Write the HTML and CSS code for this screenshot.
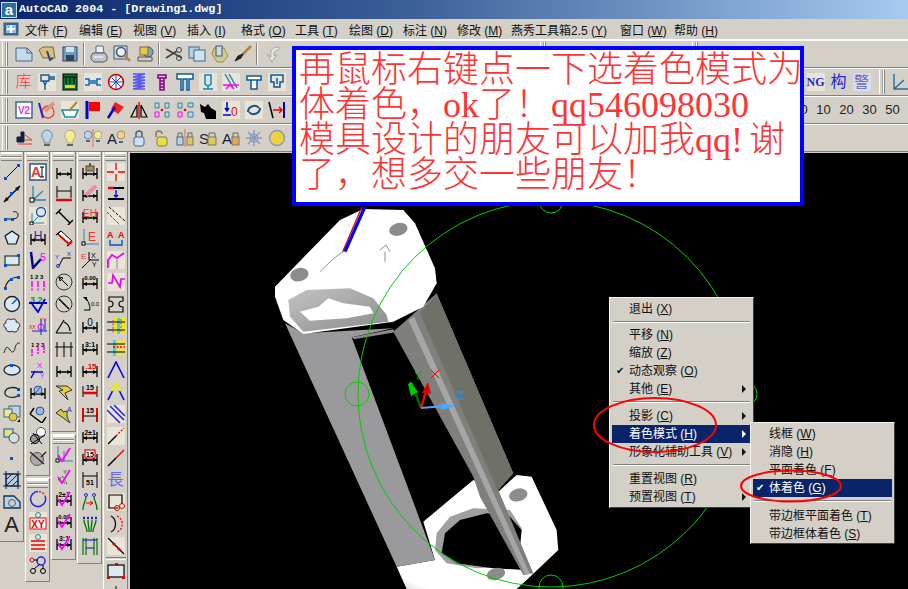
FILE: index.html
```html
<!DOCTYPE html>
<html lang="zh">
<head>
<meta charset="utf-8">
<title>AutoCAD 2004</title>
<link rel="stylesheet" href="styles.css">
</head>
<body>
<svg class="defs" width="0" height="0" aria-hidden="true">
<symbol id="d" viewBox="0 0 18 18"><path d="M2 5v11M16 5v11M2 11h14" stroke="#000" stroke-width="1.3" fill="none"/><path d="M2 11l4-2v4zM16 11l-4-2v4z" fill="#000"/></symbol>
<symbol id="c" viewBox="0 0 18 18"><path d="M3 9l4 6L15 2" stroke="#f0f" stroke-width="1.8" fill="none"/></symbol>
</svg>
<div class="page">
<header class="title"><span class="logo">a</span><span class="title-text">AutoCAD 2004 - [Drawing1.dwg]</span></header>
<nav class="menubar">
<svg class="doc-ico" viewBox="0 0 16 14"><rect x="1" y="1" width="14" height="12" fill="#2a6a9a" stroke="#4a5a6a"/><rect x="3" y="3" width="10" height="8" fill="#8fc0e0"/><path d="M8 3v8M4 7h8" stroke="#fff" stroke-width="2"/></svg>
<span class="mi">文件 (<u>F</u>)</span><span class="mi">编辑 (<u>E</u>)</span><span class="mi">视图 (<u>V</u>)</span><span class="mi">插入 (<u>I</u>)</span><span class="mi">格式 (<u>O</u>)</span><span class="mi">工具 (<u>T</u>)</span><span class="mi">绘图 (<u>D</u>)</span><span class="mi">标注 (<u>N</u>)</span><span class="mi">修改 (<u>M</u>)</span><span class="mi wide">燕秀工具箱2.5 (<u>Y</u>)</span><span class="mi">窗口 (<u>W</u>)</span><span class="mi">帮助 (<u>H</u>)</span>
</nav>

<section class="tb">
<span class="grip"></span>
<svg class="t" viewBox="0 0 18 18"><path d="M1 3h11l5 5v8H1z" fill="#c5dbe9" stroke="#3a6a8a"/><path d="M12 3v5h5" stroke="#3a6a8a"/></svg>
<svg class="t" viewBox="0 0 18 18"><path d="M1 5l4-3h10l2 11H5z" fill="#d8c080" stroke="#7a6a30"/><path d="M9 6l3 9 3-2" stroke="#2a4a7a" stroke-width="2"/></svg>
<svg class="t" viewBox="0 0 18 18"><rect x="2" y="2" width="14" height="14" fill="#6f9fc0" stroke="#2a4a6a"/><rect x="5" y="2" width="8" height="5" fill="#dde"/><rect x="5" y="10" width="8" height="6" fill="#345"/></svg>
<span class="sep"></span>
<svg class="t" viewBox="0 0 18 18"><path d="M6 8V1h7l1 7z" fill="#eee" stroke="#667"/><path d="M3 8h12l2 3v4l-3 2H4l-3-3v-3z" fill="#bcc4cc" stroke="#556"/><path d="M4 12h9" stroke="#fff"/></svg>
<svg class="t" viewBox="0 0 18 18"><rect x="1" y="1" width="13" height="13" fill="#c8dbe8" stroke="#456"/><circle cx="8" cy="7" r="4.5" fill="#eef" stroke="#456" stroke-width="1.5"/><path d="M11 10l6 6" stroke="#a86" stroke-width="2.5"/></svg>
<svg class="t" viewBox="0 0 18 18"><circle cx="12" cy="7" r="5" fill="#7ab" stroke="#456"/><rect x="4" y="2" width="8" height="8" fill="#dc4" stroke="#863"/><path d="M2 12h14v4H2z" fill="#ccc" stroke="#555"/></svg>
<span class="sep"></span>
<svg class="t" viewBox="0 0 18 18"><path d="M1 4l16 9M1 13l11-7" stroke="#444" stroke-width="1.6"/><circle cx="14" cy="5" r="2.5" stroke="#345"/><circle cx="14" cy="13" r="2.5" stroke="#345"/></svg>
<svg class="t" viewBox="0 0 18 18"><rect x="1" y="2" width="10" height="11" fill="#b8d0e2" stroke="#3a6a8a"/><rect x="6" y="5" width="11" height="11" fill="#d2e2ee" stroke="#3a6a8a"/></svg>
<svg class="t" viewBox="0 0 18 18"><path d="M3 3h10l4 8-5 6H6L1 9z" fill="#cc9" stroke="#a83"/><rect x="5" y="1" width="6" height="10" fill="#ccdbe8" stroke="#456"/></svg>
<svg class="t" viewBox="0 0 18 18"><path d="M17 1L8 10" stroke="#a83" stroke-width="2.5"/><path d="M9 9l-2 4-6 3 3-5z" fill="#222" stroke="#222"/></svg>
<span class="sep"></span>
<svg class="t" viewBox="0 0 18 18"><path d="M16 2c-8 0-9 5-8 10l-4-3 5 8 5-8-3 2c-1-4 1-6 5-6z" fill="#e8e6e0" stroke="#aaa"/></svg>
<span class="fill-a"></span><span class="grip short"></span><span class="fill-b"></span><span class="grip short"></span>
</section>

<section class="tb">
<span class="grip"></span>
<span class="t ku">库</span>
<svg class="t b" viewBox="0 0 18 18"><path d="M3 2h8v6H3zM11 4h6M11 6h6M5 8l2 4 2-4M7 12v5" stroke="#0a5a9a" stroke-width="1.4"/></svg>
<svg class="t" viewBox="0 0 18 18"><rect x="2" y="1" width="14" height="16" fill="#0a7a3a" stroke="#000"/><path d="M2 4h14M5 4v7M9 4v7M13 4v7" stroke="#000"/><rect x="4" y="12" width="10" height="3" fill="#fc0"/></svg>
<svg class="t b" viewBox="0 0 18 18"><path d="M1 6h4v2h8V6h4M1 12h4v-2h8v2h4" stroke="#0a6ac0" stroke-width="1.6"/></svg>
<svg class="t" viewBox="0 0 18 18"><circle cx="9" cy="9" r="7.5" fill="#fff" stroke="#c00" stroke-width="1.5"/><path d="M9 2v14M2 9h14M4 14L14 4M5 5l9 9" stroke="#24c"/></svg>
<svg class="t" viewBox="0 0 18 18"><path d="M3 1h12L3 4h12L3 7h12L3 10h12L3 13h12L3 16h12" stroke="#55e" stroke-width="1.4"/></svg>
<svg class="t" viewBox="0 0 18 18"><path d="M5 2h8v3H5zM7 5h4v12H7zM7 8h4M7 11h4M7 14h4" stroke="#808" stroke-width="1.5"/></svg>
<svg class="t" viewBox="0 0 18 18"><path d="M1 1h16v5h-4v11h-2V6H7v11H5V6H1z" fill="#fff" stroke="#0a5a9a" stroke-width="1.5"/></svg>
<svg class="t b" viewBox="0 0 18 18"><path d="M6 2h6v9l-3 2-3-2zM9 13v3M4 16h10" stroke="#08c" stroke-width="1.5"/></svg>
<svg class="t b" viewBox="0 0 18 18"><path d="M3 1l8 14M7 1l8 14" stroke="#28a" stroke-width="1.5"/><path d="M1 12h16M4 16l4-4 4 4" stroke="#f0f" stroke-width="1.5"/></svg>
<svg class="t" viewBox="0 0 18 18"><path d="M2 3h14v4H2zM6 7h6v9H6z" fill="#fff" stroke="#0a5a9a" stroke-width="1.5"/></svg>
<svg class="t b" viewBox="0 0 18 18"><path d="M3 2h12v7h-3v5H6V9H3zM9 5v6" stroke="#0a5a9a" stroke-width="1.5"/></svg>
<span class="fill-c"></span>
<span class="t ng">NG</span><span class="t gou">构</span><span class="t jing">警</span>
<span class="grip mid"></span>
<svg class="t" viewBox="0 0 18 18"><path d="M2 1v15h15M2 16l10-9" stroke="#2a6a9a" stroke-width="1.4"/></svg>
</section>

<section class="tb">
<span class="grip"></span>
<svg class="t" viewBox="0 0 18 18"><rect x="1" y="1" width="16" height="16" fill="#fff" stroke="#3a6a8a" stroke-width="1.5"/><text x="9" y="13" text-anchor="middle" font-size="10" font-weight="700" fill="#e3e">V2</text></svg>
<svg class="t" viewBox="0 0 18 18"><circle cx="10" cy="11" r="6" stroke="#f33" stroke-width="1.3"/><path d="M1 2l4 15" stroke="#22c" stroke-width="2"/><path d="M7 10l9-8" stroke="#d97" stroke-width="4"/></svg>
<svg class="t b" viewBox="0 0 18 18"><path d="M1 9h16l-3 7H4z" fill="#fff" stroke="#28a" stroke-width="1.6"/><path d="M16 1L8 10" stroke="#a83" stroke-width="2"/></svg>
<svg class="t" viewBox="0 0 18 18"><rect x="5" y="1" width="11" height="9" fill="#f00"/><path d="M3 0v18" stroke="#00c" stroke-width="3"/></svg>
<svg class="t" viewBox="0 0 18 18"><path d="M8 1l9 5-6 7-7-5z" fill="#e22"/><path d="M8 6L1 17" stroke="#00c" stroke-width="2.5"/></svg>
<svg class="t" viewBox="0 0 18 18"><path d="M7 4L1 16h6zM11 4l6 12h-6z" stroke="#000" stroke-width="1.2"/><path d="M9 1v17" stroke="#e00" stroke-width="1.4"/></svg>
<svg class="t" viewBox="0 0 18 18"><path d="M2 2h4v5H2zM12 2h4v5h-4z" stroke="#28a"/><path d="M2 11h4v5H2z" stroke="#f0f"/><path d="M12 11h4v5h-4z" stroke="#28a"/><circle cx="9" cy="9" r="1.3" fill="#e00" stroke="none"/></svg>
<svg class="t" viewBox="0 0 18 18"><path d="M2 2h4v5H2z" stroke="#28a"/><path d="M12 2h5v4h-5zM12 11h5v5h-5z" stroke="#28a"/><path d="M2 11h4v5H2z" stroke="#f0f"/><circle cx="9" cy="9" r="1.3" fill="#e00" stroke="none"/></svg>
<svg class="t" viewBox="0 0 18 18"><path d="M1 3l5 3 3-3 3 4 5 3v8H7l-2-6-3-1z" fill="#000" stroke="none"/></svg>
<svg class="t b" viewBox="0 0 18 18"><path d="M5 1v8M3 7l2 3 2-3M1 14h8" stroke="#00c" stroke-width="1.5"/><text x="9" y="15" font-size="12" fill="#e00">0</text></svg>
<svg class="t b" viewBox="0 0 18 18"><path d="M3 11c0-6 8-8 11-4M15 7c0 6-8 8-11 4" stroke="#158" stroke-width="2"/></svg>
<svg class="t" viewBox="0 0 18 18"><path d="M1 1l4 16" stroke="#000" stroke-width="1.6"/><path d="M16 1v16" stroke="#00c" stroke-width="2"/><path d="M5 9h9M11 6l3 3-3 3" stroke="#e00" stroke-width="1.4"/></svg>
<span class="fill-d"></span>
<span class="t num">00</span><span class="t num">10</span><span class="t num">20</span><span class="t num">30</span><span class="t num">50</span>
</section>

<section class="tb">
<span class="grip"></span>
<svg class="t" viewBox="0 0 18 18"><path d="M6 3h3v5H6zM2 8h7v5H2z" fill="#124" stroke="#124"/><path d="M10 6l7 5M10 11h7M3 15h14" stroke="#e33"/></svg>
<svg class="t" viewBox="0 0 18 18"><path d="M9 1a5.500 5.500 0 0 1 3 10v3H6v-3A5.500 5.500 0 0 1 9 1z" fill="#b8d4e8" stroke="#789"/><path d="M6 16h6" stroke="#567" stroke-width="2"/></svg>
<svg class="t" viewBox="0 0 18 18"><path d="M9 1a5.500 5.500 0 0 1 3 10v3H6v-3A5.500 5.500 0 0 1 9 1z" fill="#f4ec90" stroke="#aa8"/><path d="M6 16h6" stroke="#567" stroke-width="2"/></svg>
<svg class="t" viewBox="0 0 18 18"><circle cx="4" cy="6" r="4" fill="#b8d4e8" stroke="#789"/><circle cx="14" cy="6" r="4" fill="#f4ec90" stroke="#aa8"/><path d="M2 12h4M12 12h4" stroke="#567" stroke-width="2"/><path d="M9 0v18" stroke="#e66"/></svg>
<svg class="t" viewBox="0 0 18 18"><text x="0" y="15" font-size="15" font-family="Liberation Serif" fill="#124">A</text><circle cx="14" cy="6" r="4" fill="#f4d090" stroke="#a86"/><path d="M12 13h4" stroke="#567" stroke-width="2"/></svg>
<svg class="t" viewBox="0 0 18 18"><rect x="4" y="8" width="10" height="9" rx="2" fill="#cfe0ec" stroke="#468"/><path d="M6 8V5a3 3 0 0 1 6 0v3" stroke="#468" stroke-width="1.5"/></svg>
<svg class="t" viewBox="0 0 18 18"><rect x="4" y="8" width="10" height="9" rx="2" fill="#e8e040" stroke="#875"/><path d="M3 8V5a3 3 0 0 1 6 0" stroke="#875" stroke-width="1.5"/></svg>
<svg class="t" viewBox="0 0 18 18"><rect x="1" y="8" width="6" height="8" fill="#b8d4e8" stroke="#468"/><rect x="11" y="8" width="6" height="8" fill="#e0c860" stroke="#875"/><path d="M2 8V4h4v4M12 8V4h4v4" stroke="#666"/><path d="M9 0v18" stroke="#e66"/></svg>
<svg class="t" viewBox="0 0 18 18"><text x="0" y="15" font-size="15" font-family="Liberation Serif" fill="#124">S</text><rect x="9" y="8" width="8" height="8" fill="#e0c860" stroke="#875"/><path d="M10 8V4h6v4" stroke="#666"/></svg>
<svg class="t" viewBox="0 0 18 18"><text x="0" y="15" font-size="15" font-family="Liberation Serif" fill="#124">A</text><rect x="10" y="8" width="7" height="8" fill="#e0a860" stroke="#875"/><path d="M11 8V4h5v4" stroke="#666"/></svg>
<svg class="t" viewBox="0 0 18 18"><circle cx="9" cy="9" r="4" fill="#dde" stroke="#89b"/><path d="M9 1v16M1 9h16M3 3l12 12M15 3L3 15" stroke="#89b" stroke-width="1.5"/></svg>
<svg class="t" viewBox="0 0 18 18"><circle cx="9" cy="9" r="7.500" fill="#ecd040" stroke="#89b" stroke-width="1.400"/></svg>
</section>

<main class="work">
<div class="cols">
<div class="col first"><div class="panel">
<span class="hgrip"></span>
<svg class="i" viewBox="0 0 18 18"><path d="M3 15L15 3" stroke="#111"/><rect x="1" y="14" width="3" height="3" fill="#05c" stroke="none"/><rect x="14" y="1" width="3" height="3" fill="#05c" stroke="none"/></svg>
<svg class="i" viewBox="0 0 18 18"><path d="M1 17L17 1" stroke="#111" stroke-width="1.600"/><rect x="7" y="7" width="3" height="3" fill="#05c" stroke="none"/><path d="M1 17l2-5 3 3zM17 1l-5 2 3 3z" fill="#111" stroke="none"/></svg>
<svg class="i" viewBox="0 0 18 18"><path d="M2 12h7c5 0 6-2 6-4 0-3-3-4-5-3" stroke="#111"/><rect x="1" y="11" width="3" height="3" fill="#05c" stroke="none"/><rect x="8" y="11" width="3" height="3" fill="#05c" stroke="none"/></svg>
<svg class="i" viewBox="0 0 18 18"><path d="M9 2l7 5-3 8H5L2 7z" fill="#d8e8f4" stroke="#111" stroke-width="1.200"/></svg>
<svg class="i" viewBox="0 0 18 18"><rect x="2" y="5" width="14" height="9" fill="#d8e8f4" stroke="#111"/><rect x="1" y="13" width="3" height="3" fill="#05c" stroke="none"/><rect x="14" y="3" width="3" height="3" fill="#05c" stroke="none"/></svg>
<svg class="i" viewBox="0 0 18 18"><path d="M2 16C3 9 8 4 16 4" stroke="#111" stroke-width="1.200"/><rect x="1" y="14" width="3" height="3" fill="#05c" stroke="none"/><rect x="7" y="5" width="3" height="3" fill="#05c" stroke="none"/><rect x="14" y="3" width="3" height="3" fill="#05c" stroke="none"/></svg>
<svg class="i" viewBox="0 0 18 18"><circle cx="9" cy="9" r="7.500" fill="#d8e8f4" stroke="#222" stroke-width="1.300"/><path d="M9 9l5-5" stroke="#05c" stroke-width="1.400"/></svg>
<svg class="i" viewBox="0 0 18 18"><path d="M3 6c-1-4 4-5 5-3 2-2 6-1 5 2 4 0 5 5 2 6 1 4-4 5-6 3-2 2-7 0-6-3-3-1-3-5 0-5z" fill="#d8e8f4" stroke="#222"/></svg>
<svg class="i" viewBox="0 0 18 18"><path d="M1 14c2-8 4-6 6-3s4 3 5-2 3-5 5-5" stroke="#222"/></svg>
<svg class="i" viewBox="0 0 18 18"><ellipse cx="9" cy="9" rx="8" ry="5" fill="#d8e8f4" stroke="#222" stroke-width="1.300"/><rect x="7" y="3" width="3" height="3" fill="#05c" stroke="none"/></svg>
<svg class="i" viewBox="0 0 18 18"><path d="M15 13C9 16 1 14 2 9s11-6 14-2" stroke="#222" stroke-width="1.300"/><rect x="14" y="5" width="3" height="3" fill="#05c" stroke="none"/><rect x="14" y="11" width="3" height="3" fill="#05c" stroke="none"/></svg>
<svg class="i" viewBox="0 0 18 18"><rect x="6" y="1" width="11" height="11" fill="#b8d4e8" stroke="#467"/><rect x="1" y="4" width="8" height="8" fill="#e8e8a0" stroke="#467"/><circle cx="10" cy="12" r="4" fill="#e0c850" stroke="#764"/><path d="M17 14v3h-3z" fill="#000"/></svg>
<svg class="i" viewBox="0 0 18 18"><rect x="1" y="2" width="9" height="8" fill="#f0e070" stroke="#05c"/><circle cx="11" cy="11" r="5" fill="#cfe0ec" stroke="#543"/></svg>
<svg class="i" viewBox="0 0 18 18"><rect x="7" y="8" width="3" height="3" fill="#05c" stroke="none"/></svg>
<svg class="i" viewBox="0 0 18 18"><path d="M3 3h12v12H3z" fill="#bcd" stroke="#124"/><path d="M0 3h18M0 15h18M3 0v18M15 0v18M3 9l6-6M3 15L15 3M9 15l6-6" stroke="#124"/></svg>
<svg class="i" viewBox="0 0 18 18"><path d="M1 3h10l6 6v6H1z" fill="#b8d4e8" stroke="#135" stroke-width="1.300"/><circle cx="9" cy="10" r="3.500" fill="#ccc" stroke="#567"/></svg>
<span class="i bigA">A</span>
</div></div>

<div class="col"><div class="panel">
<span class="hgrip"></span>
<svg class="i" viewBox="0 0 18 18"><rect x="1" y="1" width="16" height="16" fill="#fff" stroke="#357" stroke-width="1.500"/><text x="2" y="14" font-size="14" font-weight="700" fill="#e33">A</text><path d="M11 4h4M13 4v10M11 14h4" stroke="#000"/></svg>
<svg class="i" viewBox="0 0 18 18"><path d="M4 15V1M4 15h13M4 15L14 6" stroke="#28a" stroke-width="1.300"/><rect x="1" y="13" width="4" height="4" fill="#fff" stroke="#000"/></svg>
<svg class="i b" viewBox="0 0 18 18"><circle cx="12" cy="5" r="4.500" stroke="#05c" stroke-width="1.300"/><path d="M3 16V6M3 16h12M3 16l6-6" stroke="#28a"/><rect x="1" y="15" width="3" height="3" fill="#fff" stroke="#000"/></svg>
<svg class="i" viewBox="0 0 18 18"><use href="#d"/><text x="9" y="11" text-anchor="middle" font-size="12" font-family="Liberation Serif" fill="#22a">H</text></svg>
<svg class="i" viewBox="0 0 18 18"><path d="M2 1l2 16 8-9" stroke="#008" stroke-width="2.400"/><text x="11" y="10" font-size="11" fill="#f0f">5</text></svg>
<svg class="i" viewBox="0 0 18 18"><text x="1" y="6" font-size="6" font-weight="700" fill="#000">1 2 3</text><path d="M3 8v6M9 8v6M15 8v6M3 15.500v2M9 15.500v2M15 15.500v2" stroke="#f0f" stroke-width="1.600"/></svg>
<svg class="i" viewBox="0 0 18 18"><text x="1" y="8" font-size="9" font-weight="700" fill="#0a0">3.2</text><path d="M0 8h18M3 9l6 8 7-13" stroke="#00c" stroke-width="1.800"/></svg>
<svg class="i" viewBox="0 0 18 18"><circle cx="12" cy="10" r="3" stroke="#e0c"/><path d="M12 2v16M3 14h15M16 2v12" stroke="#22c"/><text x="0" y="12" font-size="5" fill="#e00">XX</text><text x="11" y="5" font-size="5" fill="#e00">YY</text></svg>
<svg class="i" viewBox="0 0 18 18"><text x="2" y="8" font-size="6" font-weight="700" fill="#000">1 2 3</text><path d="M3 10v4M9 7v5M15 6v5M3 15v2M9 13v2M15 12v2" stroke="#f0f" stroke-width="1.600"/></svg>
<svg class="i" viewBox="0 0 18 18"><text x="8" y="7" font-size="8" fill="#f0f">X</text><path d="M2 17l4-7M2 11h12" stroke="#00c" stroke-width="1.500"/><text x="11" y="17" font-size="7" fill="#f0f">Y</text></svg>
<svg class="i" viewBox="0 0 18 18"><use href="#d"/><circle cx="9" cy="7" r="4" fill="#9bd" stroke="#359"/><path d="M6 11l6-8" stroke="#359"/></svg>
<svg class="i" viewBox="0 0 18 18"><path d="M1 9l12 9M5 3l-4 6M17 12l-4 6" stroke="#000" stroke-width="1.400"/><circle cx="11" cy="6" r="4" fill="#9bd" stroke="#359"/></svg>
<svg class="i" viewBox="0 0 18 18"><circle cx="12" cy="5" r="4.500" fill="#fff" stroke="#555"/><circle cx="6" cy="12" r="4.500" fill="#999" stroke="#000"/><path d="M2 17L16 8M4 6l9 11" stroke="#000"/></svg>
<svg class="i" viewBox="0 0 18 18"><circle cx="8" cy="10" r="6.500" fill="#aaa" stroke="#555"/><path d="M1 3l14 12M12 8l5-5" stroke="#222" stroke-width="1.400"/></svg>
</div><div class="panel second">
<span class="hgrip"></span>
<svg class="i" viewBox="0 0 18 18"><path d="M16 6A7.500 7.500 0 1 1 9 1.500" stroke="#22e" stroke-width="1.500"/><path d="M10 1.500a7.500 7.500 0 0 1 6 4" stroke="#e22" stroke-width="1.500" stroke-dasharray="2 1.500"/></svg>
<svg class="i b" viewBox="0 0 18 18"><circle cx="9" cy="3" r="2.500" stroke="#28a"/><rect x="1" y="6" width="16" height="11" fill="#fff" stroke="#e00"/><text x="9" y="16" text-anchor="middle" font-size="10" font-weight="700" fill="#e00">XY</text></svg>
<svg class="i b" viewBox="0 0 18 18"><circle cx="9" cy="3" r="2.500" stroke="#28a"/><path d="M2 7h14M2 11h14M2 15h14" stroke="#e00" stroke-width="1.500"/></svg>
<svg class="i" viewBox="0 0 18 18"><circle cx="12" cy="5" r="4" stroke="#22e" stroke-width="1.500"/><circle cx="3" cy="4" r="2" stroke="#e00"/><circle cx="4" cy="15" r="2.500" stroke="#000"/><circle cx="14" cy="15" r="2.500" stroke="#000"/><path d="M5 13l6-5M5 4h4M14 9v4" stroke="#000"/></svg>
</div></div>

<div class="col"><div class="panel">
<span class="hgrip"></span>
<svg class="i" viewBox="0 0 18 18"><use href="#d"/></svg>
<svg class="i" viewBox="0 0 18 18"><path d="M2 1v12M16 1v12M2 6h14" stroke="#000"/><path d="M1 15h16" stroke="#e00" stroke-width="2.500"/></svg>
<svg class="i" viewBox="0 0 18 18"><path d="M3 4l12 12M1 7l5-5M13 18l5-5" stroke="#000" stroke-width="1.500"/></svg>
<svg class="i" viewBox="0 0 18 18"><path d="M1 6l5-4M12 17l5-4" stroke="#000" stroke-width="1.400"/><path d="M3 5L14 15l3-3L6 2z" fill="#fff" stroke="#000"/><path d="M4 6L14 15l3-3" stroke="#e00" stroke-width="2"/></svg>
<svg class="i" viewBox="0 0 18 18"><path d="M4 15l4-8h8" stroke="#000"/><circle cx="3" cy="15" r="1.500" stroke="#22c"/><text x="0" y="8" font-size="6" fill="#22c">Y</text><text x="12" y="5" font-size="6" fill="#22c">X</text></svg>
<svg class="i" viewBox="0 0 18 18"><circle cx="9" cy="9" r="8" stroke="#333"/><path d="M4 4l9 9M4 4l1 4 3-3z" stroke="#000"/></svg>
<svg class="i" viewBox="0 0 18 18"><circle cx="9" cy="9" r="8" stroke="#333"/><path d="M4 4l10 10" stroke="#000" stroke-width="1.500"/></svg>
<svg class="i" viewBox="0 0 18 18"><path d="M1 16L9 3M1 16h16M9 5c4 2 6 6 6 9" stroke="#000" stroke-width="1.200"/></svg>
<svg class="i" viewBox="0 0 18 18"><path d="M2 3v15M9 3v15M16 3v15M0 8h18" stroke="#000"/></svg>
<svg class="i" viewBox="0 0 18 18"><use href="#d"/></svg>
<svg class="i" viewBox="0 0 18 18"><path d="M1 3h11l5 4-7 3 3 7-9-9 4-1z" fill="#e4d040" stroke="#333"/></svg>
<svg class="i" viewBox="0 0 18 18"><path d="M1 8l5-4 2 3 4-1v6l3 6-8-6z" fill="#d8c840" stroke="#333"/><text x="12" y="7" font-size="7" fill="#22a">A</text></svg>
</div><div class="panel second">
<span class="hgrip"></span>
<svg class="i" viewBox="0 0 18 18"><path d="M3 0v15M3 15h15M9 5v10" stroke="#28a"/><rect x="1" y="13" width="3" height="3" fill="#fff" stroke="#000"/><use href="#c"/></svg>
<svg class="i" viewBox="0 0 18 18"><text x="8" y="6" font-size="6" fill="#222">Y</text><path d="M3 12l5-4 4 8z" stroke="#070" stroke-dasharray="1.500 1"/><use href="#c"/></svg>
<svg class="i" viewBox="0 0 18 18"><use href="#d"/><text x="9" y="7" text-anchor="middle" font-size="7" font-weight="700" fill="#000">2±1</text><use href="#c"/></svg>
<svg class="i" viewBox="0 0 18 18"><use href="#d"/><text x="9" y="7" text-anchor="middle" font-size="6" font-weight="700" fill="#000">0.00</text><use href="#c"/></svg>
<svg class="i" viewBox="0 0 18 18"><use href="#d"/><text x="9" y="7" text-anchor="middle" font-size="7" font-weight="700" fill="#000">3:1</text><use href="#c"/></svg>
</div></div>

<div class="col"><div class="panel tall">
<span class="hgrip"></span>
<svg class="i" viewBox="0 0 18 18"><use href="#d"/><rect x="5" y="3" width="8" height="5" fill="#a86" stroke="#543"/><rect x="8" y="0" width="2" height="3" fill="#084"/></svg>
<svg class="i" viewBox="0 0 18 18"><use href="#d"/><path d="M5 10L15 1" stroke="#e8a" stroke-width="4"/></svg>
<svg class="i" viewBox="0 0 18 18"><use href="#d"/><text x="9" y="10" text-anchor="middle" font-size="10" fill="#e33" font-family="Liberation Serif">EH</text></svg>
<svg class="i" viewBox="0 0 18 18"><path d="M3 0v15M3 15h15" stroke="#28a"/><rect x="1" y="13" width="3" height="3" fill="#fff" stroke="#000"/><text x="7" y="12" font-size="12" fill="#e33" font-family="Liberation Serif">E</text></svg>
<svg class="i" viewBox="0 0 18 18"><path d="M1 17L10 8M8 1v8M8 9h10" stroke="#000"/><text x="0" y="8" font-size="8" fill="#e33">E</text><text x="10" y="7" font-size="7" fill="#000">X</text><text x="11" y="16" font-size="7" fill="#000">Y</text></svg>
<svg class="i" viewBox="0 0 18 18"><use href="#d"/><text x="9" y="7" text-anchor="middle" font-size="6" font-weight="700" fill="#000">0.00</text></svg>
<svg class="i" viewBox="0 0 18 18"><path d="M4 2c3 3 5 8 5 13M9 15h-6" stroke="#000"/><text x="10" y="11" font-size="6" fill="#000">0.0</text><path d="M2 2h4v4z" fill="#000" stroke="none"/></svg>
<svg class="i" viewBox="0 0 18 18"><use href="#d"/><text x="9" y="9" text-anchor="middle" font-size="10" fill="#000" font-family="Liberation Serif">0</text></svg>
<svg class="i" viewBox="0 0 18 18"><use href="#d"/><text x="9" y="8" text-anchor="middle" font-size="7" font-weight="700" fill="#000">3:1</text></svg>
<svg class="i" viewBox="0 0 18 18"><use href="#d"/><text x="10" y="8" text-anchor="middle" font-size="8" font-weight="700" fill="#e00">.15</text></svg>
<svg class="i" viewBox="0 0 18 18"><path d="M2 3v11M16 3v11" stroke="#000"/><path d="M2 10h14" stroke="#e00" stroke-width="2.500"/><text x="9" y="7" text-anchor="middle" font-size="7" font-weight="700" fill="#000">15</text></svg>
<svg class="i" viewBox="0 0 18 18"><path d="M2 3v14M16 3v14" stroke="#e00" stroke-width="2"/><path d="M2 11h14" stroke="#000"/><text x="9" y="8" text-anchor="middle" font-size="7" font-weight="700" fill="#000">15</text></svg>
<svg class="i" viewBox="0 0 18 18"><use href="#d"/><text x="9" y="8" text-anchor="middle" font-size="7" font-weight="700" fill="#000">2±1</text></svg>
<svg class="i" viewBox="0 0 18 18"><use href="#d"/><rect x="4" y="1" width="10" height="8" fill="#fff" stroke="#e00" stroke-width="1.200"/><text x="9" y="8" text-anchor="middle" font-size="7" font-weight="700" fill="#000">15</text></svg>
<svg class="i" viewBox="0 0 18 18"><path d="M2 1v16M16 1v16M2 5h14" stroke="#000"/><text x="9" y="14" text-anchor="middle" font-size="7" font-weight="700" fill="#000">51</text></svg>
<svg class="i" viewBox="0 0 18 18"><circle cx="5" cy="2" r="1.500" stroke="#22c"/><circle cx="13" cy="2" r="1.500" stroke="#22c"/><path d="M5 4c0 4-3 6-3 13M13 4c0 4 3 6 3 13" stroke="#070" stroke-width="1.300"/><path d="M5 10h7M9 8l3 2-3 2" stroke="#e00"/></svg>
<svg class="i" viewBox="0 0 18 18"><path d="M2 3h2M6 3h2M10 3h2M14 3h2" stroke="#22c" stroke-width="2.500"/><path d="M3 5c0 5 3 6 3 12M7 5c0 5 1 6 1 12M11 5c0 5-1 6-1 12M15 5c0 5-3 6-3 12" stroke="#070" stroke-width="1.300"/></svg>
<svg class="i" viewBox="0 0 18 18"><path d="M2 1v17M5 1v17M13 1v17M16 1v17" stroke="#070" stroke-width="1.200"/><path d="M2 3h14M5 11h8" stroke="#00e"/></svg>
</div></div>

<div class="col"><div class="panel long">
<span class="hgrip"></span>
<svg class="i b" viewBox="0 0 18 18"><path d="M0 9h7M11 9h7M9 0v7M9 11v7" stroke="#e00" stroke-width="1.300"/></svg>
<svg class="i" viewBox="0 0 18 18"><path d="M1 3h6" stroke="#e00" stroke-width="2.500"/><path d="M7 3h10M1 14h16" stroke="#000" stroke-width="2"/><path d="M9 5v7M7 10l2 2 2-2" stroke="#00e" stroke-width="1.300"/></svg>
<svg class="i b" viewBox="0 0 18 18"><path d="M2 0l16 14" stroke="#000" stroke-dasharray="3 1.500"/><path d="M0 5l13 13" stroke="#e00" stroke-dasharray="3 1.500"/></svg>
<svg class="i" viewBox="0 0 18 18"><text x="0" y="9" font-size="9" font-weight="700" fill="#e00">A</text><text x="11" y="9" font-size="9" font-weight="700" fill="#e00">A</text><path d="M3 11v5h12v-5" stroke="#05c" stroke-width="1.400"/></svg>
<svg class="i b" viewBox="0 0 18 18"><path d="M1 17V9l4-5 5 3 7-5" stroke="#e0e" stroke-width="1.800"/><path d="M10 8v10" stroke="#888"/></svg>
<svg class="i b" viewBox="0 0 18 18"><path d="M1 10h4l1-8 7 12 1-8h4" stroke="#e0e" stroke-width="1.600"/></svg>
<svg class="i" viewBox="0 0 18 18"><path d="M2 2h14v4c-4 0-4 2-4 3s0 3 4 3v5H2v-5c4 0 4-2 4-3s0-3-4-3z" stroke="#000" stroke-width="1.200"/></svg>
<svg class="i" viewBox="0 0 18 18"><rect x="6" y="1" width="12" height="16" fill="#ee0"/><rect x="10" y="1" width="3" height="16" fill="#2df"/><path d="M0 5h18M0 13h18" stroke="#000"/><path d="M6 3v14M14 2v14" stroke="#e0e" stroke-dasharray="2 1.500"/></svg>
<svg class="i" viewBox="0 0 18 18"><rect x="6" y="1" width="12" height="16" fill="#ed6"/><rect x="6" y="1" width="3" height="16" fill="#2df"/><path d="M0 5h18M0 13h18" stroke="#000"/><path d="M6 8h12" stroke="#e00" stroke-width="1.500" stroke-dasharray="2 1.500"/></svg>
<svg class="i" viewBox="0 0 18 18"><path d="M1 17L9 1l8 16" stroke="#00e" stroke-width="1.600"/></svg>
<svg class="i" viewBox="0 0 18 18"><path d="M1 17L6 7M17 17L12 7" stroke="#00e" stroke-width="1.600"/><path d="M5 8l4-7 4 7" stroke="#ee0" stroke-width="2.500"/></svg>
<svg class="i b" viewBox="0 0 18 18"><path d="M0 5l13 13M3 1l14 14M7 0l11 11" stroke="#22e" stroke-width="1.500"/></svg>
<svg class="i b" viewBox="0 0 18 18"><path d="M1 17L9 9" stroke="#000" stroke-width="1.400"/><path d="M9 9l8-8" stroke="#e00" stroke-width="1.400" stroke-dasharray="2 1.500"/></svg>
<svg class="i" viewBox="0 0 18 18"><path d="M1 17L9 9" stroke="#000" stroke-width="1.400"/><path d="M9 9l8-8" stroke="#e00" stroke-width="1.400"/></svg>
<span class="i chang">長</span>
<svg class="i b" viewBox="0 0 18 18"><path d="M15 11V2H2v13h9" stroke="#000" stroke-width="1.200"/><circle cx="10" cy="15" r="2.500" stroke="#e00"/><circle cx="15" cy="13" r="2.500" stroke="#e00"/></svg>
<svg class="i" viewBox="0 0 18 18"><path d="M4 1c6 3 6 13 0 16" stroke="#000" stroke-width="1.200"/><path d="M10 1c7 3 7 13 0 16" stroke="#e00" stroke-width="1.200" stroke-dasharray="2 1.500"/></svg>
<svg class="i b" viewBox="0 0 18 18"><path d="M1 1l16 16" stroke="#000" stroke-width="1.300"/><circle cx="7" cy="7" r="1.600" fill="#e00" stroke="none"/><circle cx="12" cy="12" r="1.600" fill="#e00" stroke="none"/></svg>
<span class="bar"></span>
<svg class="i" viewBox="0 0 18 18"><rect x="1" y="3" width="16" height="12" fill="#dde8f0" stroke="#000" stroke-width="1.200"/><rect x="8" y="1" width="3" height="3" fill="#e00" stroke="none"/><rect x="0" y="14" width="3" height="3" fill="#e00" stroke="none"/><rect x="15" y="14" width="3" height="3" fill="#e00" stroke="none"/></svg>
<svg class="i" viewBox="0 0 18 18"><path d="M1 9h16M9 2v14" stroke="#000"/><rect x="7" y="7" width="4" height="4" fill="#e00" stroke="none"/></svg>
</div></div>
</div>

<div class="canvas">
<svg class="scene" viewBox="130 153 778 436">
<defs>
<linearGradient id="ring" x1="0" y1="0" x2="1" y2="1"><stop offset="0" stop-color="#c4c4c4"/><stop offset="1" stop-color="#8a8a8a"/></linearGradient>
<radialGradient id="plate" cx=".45" cy=".45" r=".7"><stop offset=".86" stop-color="#fff"/><stop offset="1" stop-color="#d8d8d8"/></radialGradient>
</defs>
<g transform="translate(260 200) scale(.3333)">
<path d="M410 1100L525 1080 490 965 640 840 715 875 770 825 815 830 890 990 895 1050 800 1140 770 1167 440 1167z" fill="url(#plate)"/>
<path d="M525 1050L530 1000 570 950 640 925 750 930 785 985 780 1040 820 1120 740 1100 650 1105 560 1090z" fill="#a0a0a0"/>
<path d="M545 1060L555 1000 600 960 680 940 750 950 785 990 780 1040 800 1110 700 1105 590 1090z" fill="#000"/>
<path d="M75 370L130 400 400 385 275 412 525 1080 410 1100z" fill="#9a9a9c"/>
<path d="M275 412L400 388 405 397 282 418z" fill="#8a8a8a"/>
<path d="M400 395L530 280 760 820 715 870 820 1120 790 1125 660 890 640 830z" fill="#7f7f7c"/>
<path d="M480 340L530 282 760 820 712 870z" fill="#6f7168"/>
<path d="M445 360L462 350 810 1122 795 1125z" fill="#a6a6a6"/>
<path d="M45 260L240 60 310 27 430 30 465 70 525 205 530 250 490 320 400 365 130 402 70 360 45 290z" fill="url(#plate)"/>
<path d="M85 300L140 270 270 265 340 295 380 345 385 365 130 395 90 350z" fill="url(#ring)"/>
<path d="M120 335L175 320 205 295 250 310 330 320 340 340 260 355 150 362z" fill="#fff"/>
<ellipse cx="415" cy="88" rx="28" ry="19" fill="#8c8c8c" transform="rotate(-15 415 88)"/>
<ellipse cx="118" cy="224" rx="28" ry="20" fill="#8c8c8c" transform="rotate(-15 118 224)"/>
<ellipse cx="775" cy="885" rx="28" ry="19" fill="#8c8c8c" transform="rotate(-15 775 885)"/>
<ellipse cx="708" cy="1122" rx="28" ry="18" fill="#8c8c8c" transform="rotate(-15 708 1122)"/>
<path d="M180 215C205 190 225 170 250 155M360 150L378 135 390 155M375 155V185" stroke="#555" stroke-width="2" fill="none"/>
<path d="M306 20L248 155" stroke="#e00" stroke-width="4"/>
<path d="M315 20L255 155" stroke="#00e" stroke-width="10"/>
</g>
<g class="green">
<circle cx="551" cy="394" r="193"/>
<circle cx="357" cy="394" r="12"/>
<circle cx="551" cy="201" r="12"/>
<circle cx="551" cy="587" r="12"/>
<circle cx="745" cy="394" r="12"/>
</g>
<path d="M421 408L411 382" stroke="#060" stroke-width="2.500"/>
<path d="M408 384l3-2 7 10-7 4z" fill="#0c0"/>
<path d="M421 408L427 388" stroke="#f00" stroke-width="2.500"/>
<path d="M422 393l6-11 3 12z" fill="#d00"/>
<path d="M421 408L445 406" stroke="#4af" stroke-width="2"/>
<path d="M441 403l15 3-15 4z" fill="#4af"/>
<path d="M415 372l3 4 3-5M418 376v4" stroke="#0a0" fill="none"/>
<path d="M431 370l8 8M439 370l-8 8" stroke="#e00" fill="none"/>
<path d="M456 392h7l-7 7h7" stroke="#29e" fill="none"/>
</svg>
</div>
</main>

<aside class="note">
<p>再鼠标右键点一下选着色模式为</p>
<p>体着色&#xFF0C;ok了&#xFF01;qq546098030</p>
<p>模具设计的朋友可以加我qq<span class="bang">!</span>谢</p>
<p>了&#xFF0C;想多交一些朋友&#xFF01;</p>
</aside>

<div class="pop main-pop">
<div class="it">退出 (<u>X</u>)</div>
<hr class="tight">
<div class="it">平移 (<u>N</u>)</div>
<div class="it">缩放 (<u>Z</u>)</div>
<div class="it on">动态观察 (<u>O</u>)</div>
<div class="it more">其他 (<u>E</u>)</div>
<hr>
<div class="it more">投影 (<u>C</u>)</div>
<div class="it more hi">着色模式 (<u>H</u>)</div>
<div class="it more">形象化辅助工具 (<u>V</u>)</div>
<hr>
<div class="it">重置视图 (<u>R</u>)</div>
<div class="it more">预置视图 (<u>T</u>)</div>
</div>
<div class="pop sub-pop">
<div class="it">线框 (<u>W</u>)</div>
<div class="it">消隐 (<u>H</u>)</div>
<div class="it">平面着色 (<u>F</u>)</div>
<div class="it on hi">体着色 (<u>G</u>)</div>
<hr class="loose">
<div class="it">带边框平面着色 (<u>T</u>)</div>
<div class="it">带边框体着色 (<u>S</u>)</div>
</div>
<svg class="rings" viewBox="0 0 908 589">
<ellipse cx="655" cy="425" rx="61" ry="27"/>
<ellipse cx="791" cy="486" rx="50" ry="15.500"/>
</svg>
</div>
</body>
</html>
```

FILE: styles.css
```css
* { box-sizing: border-box; }
html, body { margin: 0; padding: 0; }
body { background: #d4d0c8; font: 12px "Liberation Sans", "Noto Sans CJK SC", sans-serif; color: #000; }
.defs { position: absolute; }
.page { position: relative; width: 908px; height: 589px; overflow: hidden; background: #d4d0c8; }

.title { height: 19px; display: flex; align-items: center; padding-left: 1px; background: linear-gradient(90deg, #0a246a 0%, #3a6098 45%, #a6caf0 100%); color: #fff; }
.logo { width: 16px; height: 16px; margin-right: 2px; border: 1px solid #cde; background: #2a6f9f; color: #fff; font: 700 15px/13px "Liberation Sans", sans-serif; text-align: center; }
.title-text { font: 700 11.7px/19px "Liberation Mono", monospace; white-space: pre; }

.menubar { height: 21px; display: flex; align-items: center; padding-left: 3px; border-bottom: 1px solid #fff; }
.doc-ico { width: 16px; height: 14px; margin-right: 6px; }
.mi { width: 54px; white-space: nowrap; color: #111; }
.mi.wide { width: 109px; }
u { text-decoration: underline; }

.tb { height: 28px; display: flex; align-items: center; padding-left: 2px; border-top: 1px solid #fff; border-bottom: 1px solid #808080; }
.grip { width: 6px; height: 24px; margin-right: 4px; flex: none; border-left: 1px solid #fff; border-right: 1px solid #808080; box-shadow: inset 2px 0 0 #d4d0c8, inset -1px 0 0 #fff; background: #a0a0a0; background-clip: content-box; }
.grip.short { margin-right: 0; }
.grip.mid { margin-left: 6px; }
.t { width: 18px; height: 18px; margin: 0 2.5px; flex: none; fill: none; stroke-width: 1; }
.t.b, .i.b { background: #e9e5d6; }
svg text { stroke: none; font-family: "Liberation Sans", sans-serif; }
.sep { width: 2px; height: 22px; margin: 0 2px; flex: none; border-left: 1px solid #808080; border-right: 1px solid #fff; }
.fill-a { width: 257px; flex: none; }
.fill-b { width: 146px; flex: none; }
.fill-c { flex: none; width: 516px; }
.fill-d { flex: none; width: 501px; }
.ku { color: #f33; font-size: 16px; line-height: 18px; text-align: center; font-weight: 300; }
.ng { font: 700 12px/18px "Liberation Serif", serif; color: #22d; background: #e9e5d6; text-align: center; }
.gou { font-size: 16px; line-height: 18px; color: #22d; text-align: center; }
.jing { font-size: 15px; line-height: 18px; color: #66b; background: #dcdce8; text-align: center; }
.num { font: 13px/18px "Liberation Sans", sans-serif; color: #222; text-align: center; white-space: nowrap; }

.work { display: flex; height: 437px; }
.cols { display: flex; width: 130px; flex: none; gap: 1px; }
.col { width: 25px; flex: none; display: flex; flex-direction: column; gap: 2px; }
.col.first { width: 24px; }
.panel { padding-bottom: 6px; display: flex; flex-direction: column; align-items: center; border-right: 1px solid #808080; border-bottom: 1px solid #808080; border-left: 1px solid #fff; }
.col.first .panel { border-left: 0; padding-bottom: 6px; }
.panel.second { padding-bottom: 5px; border-top: 1px solid #fff; }
.panel.long { height: 440px; padding-bottom: 0; }
.hgrip { width: 21px; height: 9px; flex: none; border-top: 1px solid #fff; border-bottom: 1px solid #808080; background: linear-gradient(#fff 0 1px, #d4d0c8 1px 3px, #808080 3px 4px, #fff 4px 5px, #d4d0c8 5px); margin-bottom: 0; }
.i { width: 18px; height: 18px; margin: 2px 0; flex: none; fill: none; stroke-width: 1; display: block; }
.bigA { font: 22px/20px "Liberation Sans", sans-serif; text-align: center; color: #222; }
.chang { font-size: 16px; line-height: 18px; color: #66e; text-align: center; }
.bar { width: 20px; height: 3px; flex: none; border-top: 1px solid #808080; border-bottom: 1px solid #fff; }

.canvas { flex: none; width: 778px; height: 436px; margin-top: 1px; background: #000; }
.scene { display: block; width: 778px; height: 436px; }
.green { fill: none; stroke: #0c0; stroke-width: 1; }

.note { position: absolute; left: 292px; top: 46px; width: 512px; height: 160px; padding: 3px 0 0 3px; border: 4px solid #00f; background: #fff; color: #f33; font: 300 36px/35px "Liberation Serif", "Noto Sans CJK SC", serif; white-space: nowrap; }
.note p { margin: 0; height: 35px; }
.bang { letter-spacing: 6px; }

.pop { position: absolute; padding: 2px; background: #d4d0c8; border: 1px solid; border-color: #f4f4f0 #404040 #404040 #f4f4f0; }
.main-pop { left: 609px; top: 297px; width: 145px; height: 211px; }
.sub-pop { left: 750px; top: 422px; width: 145px; height: 122px; }
.it { position: relative; height: 18px; padding-left: 17px; line-height: 18px; white-space: nowrap; color: #111; }
.sub-pop .it { padding-left: 16px; }
.pop hr { height: 2px; margin: 3px 1px 4px; border: 0; border-top: 1px solid #808080; border-bottom: 1px solid #fff; }
.pop hr.tight { margin-bottom: 3px; }
.pop hr.loose { margin-bottom: 5px; }
.it.hi { background: #0a246a; color: #fff; }
.on::before { content: "✔"; position: absolute; left: 4px; top: 0; font: 10px/18px "DejaVu Sans", sans-serif; }
.sub-pop .on::before { left: 3px; }
.more::after { content: ""; position: absolute; right: 5px; top: 5px; border: 4px solid transparent; border-left-color: currentColor; border-right-width: 0; }
.rings { position: absolute; left: 0; top: 0; width: 908px; height: 589px; fill: none; stroke: #f00; stroke-width: 2; pointer-events: none; }
```
